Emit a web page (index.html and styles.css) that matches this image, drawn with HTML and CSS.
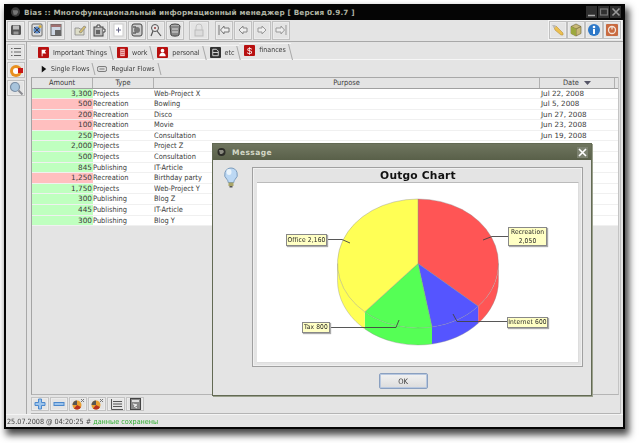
FILE: index.html
```html
<!DOCTYPE html>
<html lang="en">
<head>
<meta charset="utf-8">
<title>Bias</title>
<link rel="stylesheet" href="styles.css">
</head>
<body>
<div class="window">
  <header class="titlebar">
    <svg class="app-icon" width="13" height="12" viewBox="0 0 14 12"><ellipse cx="7" cy="6" rx="5" ry="5" fill="#3a3a3a"/><path d="M4 4h5l1 2-2 3H5z" fill="#777"/></svg>
    <span class="title-text">Bias :: Многофункциональный информационный менеджер [ Версия 0.9.7 ]</span>
    <div class="win-btns">
      <span class="win-btn"><svg width="10" height="10" viewBox="0 0 10 10"><path d="M1 8.500h7" stroke="#aaa" stroke-width="1.500"/></svg></span>
      <span class="win-btn"><svg width="10" height="10" viewBox="0 0 10 10"><rect x="1.500" y="2" width="7" height="6" fill="none" stroke="#777" stroke-width="1.200"/></svg></span>
      <span class="win-btn"><svg width="10" height="10" viewBox="0 0 10 10"><path d="M1.500 1.500l7 7M8.500 1.500l-7 7" stroke="#999" stroke-width="1.600"/></svg></span>
    </div>
  </header>

  <div class="toolbar">
    <div class="tgroup">
      <button class="tb"><svg width="12" height="12" viewBox="0 0 12 12"><rect x="1" y="1" width="10" height="10" rx="1.500" fill="#555"/><rect x="3" y="1.500" width="6" height="4" fill="#bbb"/><rect x="3.500" y="7.500" width="5" height="3" fill="#999"/></svg></button>
    </div>
    <div class="tgroup g2">
      <button class="tb"><svg width="14" height="14" viewBox="0 0 14 14"><rect x="2" y="1" width="10" height="12" rx="1" fill="#ddd" stroke="#666"/><circle cx="7" cy="7" r="3.500" fill="#5a88c8"/><path d="M4 4l6 6M10 4l-6 6" stroke="#444"/><circle cx="10" cy="3.500" r="1.500" fill="#d8b040"/></svg></button>
      <button class="tb"><svg width="14" height="14" viewBox="0 0 14 14"><rect x="2" y="1.500" width="10" height="11" fill="#cfd8e4" stroke="#666"/><rect x="2" y="1.500" width="10" height="2.500" fill="#a07070"/><rect x="6" y="7" width="6" height="6" fill="#666"/></svg></button>
    </div>
    <div class="tgroup g3">
      <button class="tb"><svg width="14" height="14" viewBox="0 0 14 14"><path d="M2 5h4l1 1h4v6H2z" fill="#ddddc8" stroke="#888" stroke-width=".8"/><path d="M6 9l5-6 2 1-5 6z" fill="#d8c070" stroke="#777" stroke-width=".6"/></svg></button>
      <button class="tb"><svg width="14" height="14" viewBox="0 0 14 14"><rect x="2" y="4" width="9" height="9" fill="#bbb" stroke="#444"/><path d="M5 4V2h3v2M11 6h2v3h-2" fill="#eee" stroke="#444"/><rect x="4" y="7" width="4" height="4" fill="#666"/></svg></button>
      <button class="tb"><svg width="14" height="14" viewBox="0 0 14 14"><rect x="3" y="1" width="9" height="12" fill="#fff" stroke="#ccc"/><path d="M5 7h5M7.500 4.500v5" stroke="#668" stroke-width="1"/></svg></button>
      <button class="tb"><svg width="14" height="14" viewBox="0 0 14 14"><rect x="2" y="1" width="10" height="12" rx="2" fill="#ccc" stroke="#444"/><circle cx="7" cy="7" r="3" fill="#777"/><path d="M3 4h3M3 10h3" stroke="#333"/></svg></button>
      <button class="tb"><svg width="14" height="14" viewBox="0 0 14 14"><circle cx="6" cy="5" r="3.500" fill="#e8e8e8" stroke="#555"/><path d="M8 8l4 5M2 13l2-5" stroke="#555" stroke-width="1.200"/><path d="M5 4h2v2H5z" fill="#a66"/></svg></button>
      <button class="tb"><svg width="14" height="14" viewBox="0 0 14 14"><ellipse cx="7" cy="3" rx="5" ry="2" fill="#aaa" stroke="#444"/><path d="M2 3l1 9c1 1.500 7 1.500 8 0l1-9" fill="#888" stroke="#444"/><path d="M4 6h6M4 9h6" stroke="#ddd"/></svg></button>
    </div>
    <div class="tgroup g4">
      <button class="tb wide"><svg width="12" height="14" viewBox="0 0 12 14"><path d="M3 7V4a3 3 0 0 1 6 0v3" fill="none" stroke="#c4c4c4"/><rect x="2" y="7" width="8" height="6" fill="#dcdcdc" stroke="#bbb"/></svg></button>
    </div>
    <div class="tgroup g5">
      <button class="tb"><svg width="14" height="12" viewBox="0 0 14 12"><path d="M2 1v10M7 2L3.500 6 7 10V8h5V4H7z" fill="#eee" stroke="#777"/></svg></button>
      <button class="tb"><svg width="14" height="12" viewBox="0 0 14 12"><path d="M7 2L3 6l4 4V8h4V4H7z" fill="#eee" stroke="#888"/></svg></button>
      <button class="tb"><svg width="14" height="12" viewBox="0 0 14 12"><path d="M7 2l4 4-4 4V8H3V4h4z" fill="#eee" stroke="#999"/></svg></button>
      <button class="tb"><svg width="14" height="12" viewBox="0 0 14 12"><path d="M12 1v10M7 2l3.500 4L7 10V8H2V4h5z" fill="#eee" stroke="#999"/></svg></button>
    </div>
    <div class="tgroup right">
      <button class="tb"><svg width="14" height="14" viewBox="0 0 14 14"><path d="M3 4l2-1 2 2 5 5v2h-2L4 7z" fill="#ecc050" stroke="#b89040" stroke-width=".6"/><path d="M1 2l3 0 1 2-2 1z" fill="#bbb"/></svg></button>
      <button class="tb"><svg width="14" height="14" viewBox="0 0 14 14"><path d="M7 1l5 2.500v7L7 13l-5-2.500v-7z" fill="#c8b878" stroke="#6a6030" stroke-width=".6"/><path d="M7 6v7M2 3.500L7 6l5-2.500" stroke="#6a6030" fill="none" stroke-width=".7"/><path d="M2 3.500L7 6v7l-5-2.500z" fill="#9ca83e"/></svg></button>
      <button class="tb"><svg width="14" height="14" viewBox="0 0 14 14"><circle cx="7" cy="7" r="6" fill="#2d78c8"/><circle cx="7" cy="4" r="1.300" fill="#fff"/><rect x="6" y="6" width="2" height="5" fill="#fff"/></svg></button>
      <button class="tb"><svg width="14" height="14" viewBox="0 0 14 14"><rect x="1" y="1" width="12" height="12" rx="1" fill="#c86a40"/><circle cx="7" cy="7" r="3.500" fill="none" stroke="#f4e4d8" stroke-width="1.300"/><path d="M7 3.500v3" stroke="#f4e4d8" stroke-width="1.300"/></svg></button>
    </div>
  </div>

  <div class="main">
    <aside class="sidebar">
      <button class="sb"><svg width="12" height="10" viewBox="0 0 12 10"><path d="M1 1.500h1.500M4 1.500h7M1 5h1.500M4 5h7M1 8.500h1.500M4 8.500h7" stroke="#666"/></svg></button>
      <button class="sb"><svg width="15" height="15" viewBox="0 0 15 15"><circle cx="7" cy="8" r="6" fill="#e89020"/><circle cx="7" cy="8" r="3" fill="#fff"/><rect x="9" y="5" width="5" height="5" fill="#c81818"/></svg></button>
      <button class="sb"><svg width="15" height="15" viewBox="0 0 15 15"><circle cx="6" cy="6" r="4.500" fill="#a8c4dc" stroke="#7a8ea4" stroke-width="1.200"/><path d="M9.500 9.500l4 4" stroke="#8a8a90" stroke-width="2"/></svg></button>
    </aside>

    <div class="content">
      <nav class="tabs">
        <div class="tab first"><svg width="11" height="11" viewBox="0 0 12 12"><rect width="12" height="12" rx="1" fill="#b81010"/><path d="M4 10V3h5l-1.500 2L9 7H5v3z" fill="#fff"/></svg><span>Important Things</span></div>
        <div class="tab"><svg width="11" height="11" viewBox="0 0 12 12"><rect width="12" height="12" rx="1" fill="#b81010"/><rect x="3.500" y="2" width="5" height="8" fill="#f4c0c0"/><path d="M4 4h4M4 6h4M4 8h4" stroke="#b81010" stroke-width=".6"/></svg><span>work</span></div>
        <div class="tab"><svg width="11" height="11" viewBox="0 0 12 12"><rect width="12" height="12" rx="1" fill="#b81010"/><circle cx="6" cy="4" r="2" fill="#fff"/><path d="M2.500 10c0-5 7-5 7 0z" fill="#fff"/></svg><span>personal</span></div>
        <div class="tab"><svg width="11" height="11" viewBox="0 0 12 12"><rect width="12" height="12" rx="1" fill="#333"/><path d="M3 2.500h4l2 2v5H3z" fill="none" stroke="#ddd"/><path d="M3 6h6" stroke="#ddd"/></svg><span>etc</span></div>
        <div class="tab active"><svg width="11" height="11" viewBox="0 0 12 12"><rect width="12" height="12" rx="1" fill="#b81010"/><text x="6" y="10" font-size="10" text-anchor="middle" fill="#fff" font-family="Liberation Sans">$</text></svg><span>finances</span></div>
      </nav>
      <div class="panel">
        <nav class="subtabs">
          <div class="subtab active"><svg width="6" height="8" viewBox="0 0 8 9"><path d="M1 0l6 4.500L1 9z" fill="#111"/></svg><span>Single Flows</span></div>
          <div class="subtab"><svg width="10" height="8" viewBox="0 0 12 9"><rect x=".5" y="1.500" width="11" height="6" rx="2" fill="#ddd" stroke="#666"/><path d="M3 4.500h6" stroke="#666"/></svg><span>Regular Flows</span></div>
        </nav>
        <div class="viewport">
          <div class="row head">
            <div>Amount</div><div>Type</div><div>Purpose</div>
            <div>Date <svg class="sort" width="7" height="4" viewBox="0 0 7 4"><path d="M0 0h7L3.500 4z" fill="#556"/></svg></div>
          </div>
          <div class="row"><div class="amt in">3,300</div><div>Projects</div><div>Web-Project X</div><div class="date">Jul 22, 2008</div></div>
          <div class="row"><div class="amt out">500</div><div>Recreation</div><div>Bowling</div><div class="date">Jul 5, 2008</div></div>
          <div class="row"><div class="amt out">200</div><div>Recreation</div><div>Disco</div><div class="date">Jun 27, 2008</div></div>
          <div class="row"><div class="amt out">100</div><div>Recreation</div><div>Movie</div><div class="date">Jun 23, 2008</div></div>
          <div class="row"><div class="amt in">250</div><div>Projects</div><div>Consultation</div><div class="date">Jun 19, 2008</div></div>
          <div class="row"><div class="amt in">2,000</div><div>Projects</div><div>Project Z</div><div></div></div>
          <div class="row"><div class="amt in">500</div><div>Projects</div><div>Consultation</div><div></div></div>
          <div class="row"><div class="amt in">845</div><div>Publishing</div><div>IT-Article</div><div></div></div>
          <div class="row"><div class="amt out">1,250</div><div>Recreation</div><div>Birthday party</div><div></div></div>
          <div class="row"><div class="amt in">1,750</div><div>Projects</div><div>Web-Project Y</div><div></div></div>
          <div class="row"><div class="amt in">300</div><div>Publishing</div><div>Blog Z</div><div></div></div>
          <div class="row"><div class="amt in">445</div><div>Publishing</div><div>IT-Article</div><div></div></div>
          <div class="row"><div class="amt in">300</div><div>Publishing</div><div>Blog Y</div><div></div></div>
        </div>
        <div class="bottombar">
          <button class="bb"><svg width="12" height="12" viewBox="0 0 12 12"><path d="M4.500 1h3v3.500H11v3H7.500V11h-3V7.500H1v-3h3.500z" fill="#9cc4ec" stroke="#4c88cc"/></svg></button>
          <button class="bb"><svg width="12" height="12" viewBox="0 0 12 12"><rect x="1" y="4.500" width="10" height="3" fill="#9cc4ec" stroke="#4c88cc"/></svg></button>
          <button class="bb"><svg width="14" height="12" viewBox="0 0 14 12"><circle cx="6" cy="7" r="4.500" fill="#e8a030"/><path d="M6 7V2.500A4.500 4.500 0 0 0 1.500 7z" fill="#555"/><path d="M6 7l-3 3.500A4.500 4.500 0 0 0 10 9z" fill="#b83020"/><path d="M10 1l3 3M13 1l-3 3" stroke="#777"/></svg></button>
          <button class="bb"><svg width="14" height="12" viewBox="0 0 14 12"><circle cx="6" cy="7" r="4.500" fill="#e8a030"/><path d="M6 7V2.500A4.500 4.500 0 0 0 1.500 7z" fill="#555"/><path d="M6 7l-3 3.500A4.500 4.500 0 0 0 10 9z" fill="#b83020"/><path d="M10 1l3 3M13 1l-3 3" stroke="#777"/></svg></button>
          <button class="bb"><svg width="13" height="11" viewBox="0 0 13 11"><path d="M1.500 0v10.500H13M3 2.500h9M3 5h9M3 7.500h9" stroke="#555" fill="none"/></svg></button>
          <button class="bb"><svg width="11" height="12" viewBox="0 0 11 12"><rect x=".5" y=".5" width="10" height="11" fill="#888" stroke="#444"/><rect x="2" y="2" width="7" height="2" fill="#ddd"/><path d="M3 6l4 1-3 1 3 2" stroke="#eee" fill="none"/></svg></button>
        </div>
      </div>
    </div>
  </div>

  <footer class="status">25.07.2008 @ 04:20:25 # <span class="ok">данные сохранены</span></footer>
</div>

<section class="dialog">
  <header class="dlg-title">
    <svg class="dlg-icon" width="11" height="10" viewBox="0 0 11 10"><ellipse cx="5.500" cy="5" rx="4" ry="4" fill="#2c2c28"/><path d="M3 3h4l1 2-2 2H4z" fill="#8a8a80"/></svg>
    <span class="dlg-name">Message</span>
    <span class="dlg-close"><svg width="9" height="9" viewBox="0 0 9 9"><path d="M1 1l7 7M8 1L1 8" stroke="#fff" stroke-width="1.600"/></svg></span>
  </header>
  <div class="dlg-body">
    <div class="dlg-top">
      <svg class="bulb" width="16" height="21" viewBox="0 0 16 21"><path d="M8 1a6.500 6.500 0 0 1 4 11.500c-1 1-1 2-1.200 3H5.200c-.2-1-.2-2-1.200-3A6.500 6.500 0 0 1 8 1z" fill="#bcd8f4" stroke="#7c9cbc"/><ellipse cx="6" cy="5" rx="2.500" ry="3" fill="#eaf4fc"/><rect x="5.500" y="15.500" width="5" height="3.500" fill="#a8a468"/><rect x="6.500" y="19" width="3" height="1.500" fill="#555"/></svg>
      <div class="chart-panel">
        <h2 class="chart-title">Outgo Chart</h2>
        <div class="plot">
          <svg class="pie" width="322" height="180" viewBox="257 182 322 180">
            <path d="M498.500 263.500A80.500 64.500 0 0 1 478.200 306.300V323.300A80.500 64.500 0 0 0 498.500 280.500Z" fill="#ff5555"/>
            <path d="M478.200 306.300A80.500 64.500 0 0 1 432 327V344A80.500 64.500 0 0 0 478.200 323.300Z" fill="#5555ff"/>
            <path d="M432 327A80.500 64.500 0 0 1 364.800 311.900V328.900A80.500 64.500 0 0 0 432 344Z" fill="#55ff55"/>
            <path d="M364.800 311.900A80.500 64.500 0 0 1 337.500 263.500V280.500A80.500 64.500 0 0 0 364.800 328.900Z" fill="#ffff55"/>
            <path class="slice" d="M418 263.500V199A80.500 64.500 0 0 1 478.200 306.300Z" fill="#ff5555"/>
            <path class="slice" d="M418 263.500L478.200 306.300A80.500 64.500 0 0 1 432 327Z" fill="#5555ff"/>
            <path class="slice" d="M418 263.500L432 327A80.500 64.500 0 0 1 364.800 311.900Z" fill="#55ff55"/>
            <path class="slice" d="M418 263.500L364.800 311.900A80.500 64.500 0 0 1 418 199Z" fill="#ffff55"/>
            <path class="edge" d="M337.500 263.500V280.500A80.500 64.500 0 0 0 498.500 280.500V263.500"/>
            <path class="leader" d="M327 239.500H342L350 243"/>
            <path class="leader" d="M508 236.500H492L483 240"/>
            <path class="leader" d="M330 327.500H396L399 320"/>
            <path class="leader" d="M507 321.500H457L453 314"/>
          </svg>
          <div class="callout c-office">Office 2,160</div>
          <div class="callout c-rec">Recreation<br>2,050</div>
          <div class="callout c-tax">Tax 800</div>
          <div class="callout c-net">Internet 600</div>
        </div>
      </div>
    </div>
    <div class="dlg-foot"><button class="ok-btn">OK</button></div>
  </div>
</section>
</body>
</html>
```

FILE: styles.css
```css
* { box-sizing: border-box; }
html, body { margin: 0; height: 100%; }
body {
  background: #fff;
  width: 640px;
  height: 443px;
  overflow: hidden;
  padding: 4px 15px 14px 4px;
  font-family: "DejaVu Sans Condensed", "DejaVu Sans", sans-serif;
  font-size: 7.4px;
  color: #3a3a3a;
  position: relative;
}
button { font: inherit; color: inherit; padding: 0; margin: 0; cursor: default; display: flex; align-items: center; justify-content: center; }

.window {
  width: 621px;
  height: 425px;
  border: 2px solid #050505;
  border-top: 0;
  background: #e4e4e4;
  box-shadow: 3px 5px 7px 1px rgba(0,0,0,.72);
  display: flex;
  flex-direction: column;
  filter: blur(.3px);
}

.titlebar {
  height: 16px;
  background: #050505;
  display: flex;
  align-items: center;
  padding: 0 2px 0 3px;
  flex: none;
}
.app-icon { margin-right: 2px; }
.title-text { font-family: "DejaVu Sans", sans-serif; color: #b0b4a4; font-weight: bold; font-size: 7.25px; letter-spacing: .17px; white-space: nowrap; }
.win-btns { margin-left: auto; display: flex; gap: 1px; }
.win-btn { width: 11px; height: 12px; background: #2f2f2f; display: flex; align-items: center; justify-content: center; }

.toolbar {
  height: 22px;
  flex: none;
  display: flex;
  align-items: center;
  padding: 0 1px 1px 1px;
  border-bottom: 1px solid #a8a8a8;
}
.tgroup { display: flex; gap: 1px; height: 19px; }
.g2 { margin-left: 3px; }
.g3 { margin-left: 6px; }
.g4 { margin-left: 5px; }
.g5 { margin-left: 6px; }
.right { margin-left: auto; gap: 0; border: 1px solid #f4f4f4; height: 20px; }
.tb {
  width: 18px;
  height: 100%;
  background: #e4e4e4;
  border: 1px solid #c0c0c0;
  box-shadow: inset 0 0 0 1px #ececec;
}
.tb.wide { width: 20px; }

.main { flex: 1; display: flex; min-height: 0; }
.sidebar {
  width: 21px;
  flex: none;
  border-right: 1px solid #a8a8a8;
  padding: 2px 0 0 1px;
  display: flex;
  flex-direction: column;
  gap: 2px;
}
.sb {
  width: 18px;
  height: 16px;
  background: #e4e4e4;
  border: 1px solid #c0c0c0;
  box-shadow: inset 0 0 0 1px #ececec;
}

.content { flex: 1; display: flex; flex-direction: column; padding: 1px 2px 0 2px; min-width: 0; }
.tabs {
  height: 17px;
  flex: none;
  display: flex;
  align-items: flex-end;
  padding-left: 2px;
  border-bottom: 1px solid #f6f6f6;
  font-size: 7px;
}
.tab {
  height: 14px;
  display: flex;
  align-items: center;
  gap: 4px;
  padding: 0 5px;
  position: relative;
  border-top: 1px solid #f2f2f2;
}
.tab.first { padding-left: 7px; }
.tab::after {
  content: "";
  position: absolute;
  right: 0;
  top: 0;
  bottom: -1px;
  border-right: 1px solid #a8a8a8;
  transform: skewX(14deg);
}
.tab.active { height: 16px; padding-bottom: 3px; }
.tab svg { flex: none; }

.panel {
  flex: 1;
  display: flex;
  flex-direction: column;
  border-right: 1px solid #c0c0c0;
  min-height: 0;
  padding-left: 2px;
}
.subtabs {
  height: 17px;
  flex: none;
  display: flex;
  align-items: flex-end;
  padding: 0 0 2px 8px;
  font-size: 6.9px;
}
.subtab {
  height: 13px;
  display: flex;
  align-items: center;
  gap: 4px;
  padding: 0 6px 0 2px;
  position: relative;
}
.subtab::after {
  content: "";
  position: absolute;
  right: 1px;
  top: 1px;
  bottom: 0;
  border-right: 1px solid #a8a8a8;
  transform: skewX(14deg);
}

.viewport {
  flex: 1;
  min-height: 0;
  border-left: 1px solid #a4a4a4;
  border-bottom: 1px solid #b4b4b4;
  border-right: 1px solid #c4c4c4;
  margin-right: 1px;
}
.row {
  display: grid;
  grid-template-columns: 61px 61px 386px 75px;
  height: 10.6px;
  line-height: 10px;
  background: #fff;
  border-bottom: 1px solid #f0f0f0;
  white-space: nowrap;
}
.row > div { padding-left: 0; overflow: hidden; }
.row .amt { text-align: right; padding: 0 1px 0 0; font-family: "DejaVu Sans", sans-serif; font-size: 7.3px; }
.row .date { font-family: "DejaVu Sans", sans-serif; font-size: 7.2px; padding-left: 1px; }
.in { background: #bfffbf; }
.out { background: #ffbfbf; }
.row.head {
  height: 11.5px;
  background: #e4e4e4;
  border-top: 1px solid #a8a8a8;
  border-bottom: 1px solid #a0a0a0;
  line-height: 10px;
}
.row.head > div { text-align: center; border-right: 1px solid #b0b0b0; }
.sort { margin-left: 3px; }

.bottombar {
  height: 19px;
  flex: none;
  display: flex;
  align-items: center;
  gap: 1px;
  border-bottom: 1px solid #b4b4b4;
}
.bb {
  width: 18px;
  height: 14px;
  background: #e4e4e4;
  border: 1px solid #c4c4c4;
  box-shadow: inset 0 0 0 1px #ececec;
}

.status {
  height: 13px;
  flex: none;
  padding-left: 1px;
  font-size: 7.2px;
  line-height: 14px;
  border-top: 1px solid #f4f4f4;
  color: #444;
}
.ok { color: #2fae2f; }

.dialog {
  position: absolute;
  left: 212px;
  top: 143px;
  width: 380px;
  height: 253px;
  background: #e4e4e4;
  border: 1.5px solid #636a54;
  display: flex;
  flex-direction: column;
  box-shadow: 1px 1px 0 #9aa08c;
  filter: blur(.3px);
}
.dlg-title {
  height: 16px;
  flex: none;
  background: linear-gradient(#6f755f, #596049);
  display: flex;
  align-items: center;
  padding: 0 3px;
  color: #d4d8c8;
}
.dlg-icon { margin-right: 5px; }
.dlg-name { font-family: "DejaVu Sans", sans-serif; font-weight: bold; font-size: 7.5px; letter-spacing: .45px; }
.dlg-close { margin-left: auto; width: 11px; height: 11px; background: #7c8270; display: flex; align-items: center; justify-content: center; }
.dlg-body { flex: 1; display: flex; flex-direction: column; padding: 7px 8px 0 10px; min-height: 0; }
.dlg-top { display: flex; gap: 13px; height: 200px; flex: none; }
.bulb { flex: none; }
.chart-panel {
  width: 331px;
  height: 200px;
  border: 1px solid #a0a0a0;
  padding: 0 3px 3px 4px;
  display: flex;
  flex-direction: column;
  box-shadow: inset 0 0 0 1px #f0f0f0;
}
.chart-title { margin: 0; height: 14px; flex: none; font-family: "DejaVu Sans", sans-serif; font-size: 10.7px; line-height: 15px; text-align: center; font-weight: bold; color: #111; letter-spacing: .2px; }
.plot { flex: 1; background: #fff; position: relative; border-top: 1px solid #bbb; border-right: 1px solid #ddd; border-bottom: 1px solid #ddd; }
.pie { position: absolute; left: 0; top: -1px; }
.slice { stroke: #8a8a8a; stroke-opacity: .55; stroke-width: .7; }
.edge { fill: none; stroke: #8a8a8a; stroke-opacity: .5; stroke-width: .7; }
.leader { fill: none; stroke: #444; stroke-width: .9; }
.callout {
  position: absolute;
  background: #ffffc4;
  border: 1px solid #888;
  box-shadow: 1px 1px 1px #aaa;
  color: #222;
  font-size: 6.6px;
  line-height: 8.500px;
  letter-spacing: .15px;
  text-align: center;
  white-space: nowrap;
  display: flex;
  align-items: center;
  justify-content: center;
}
.c-office { left: 29px; top: 51px; width: 41px; height: 12px; }
.c-rec { left: 251px; top: 44px; width: 39px; height: 19px; }
.c-tax { left: 45px; top: 139px; width: 28px; height: 11px; }
.c-net { left: 250px; top: 134px; width: 41px; height: 11px; }
.dlg-foot { flex: 1; display: flex; align-items: flex-start; justify-content: center; padding-top: 6px; }
.ok-btn {
  width: 49px;
  height: 16px;
  background: linear-gradient(#f2f2f2, #dcdcdc);
  border: 1px solid #8aa0c0;
  border-radius: 2px;
  box-shadow: inset 0 0 0 1px #b8c8e0;
  font-size: 7.5px;
}
```
